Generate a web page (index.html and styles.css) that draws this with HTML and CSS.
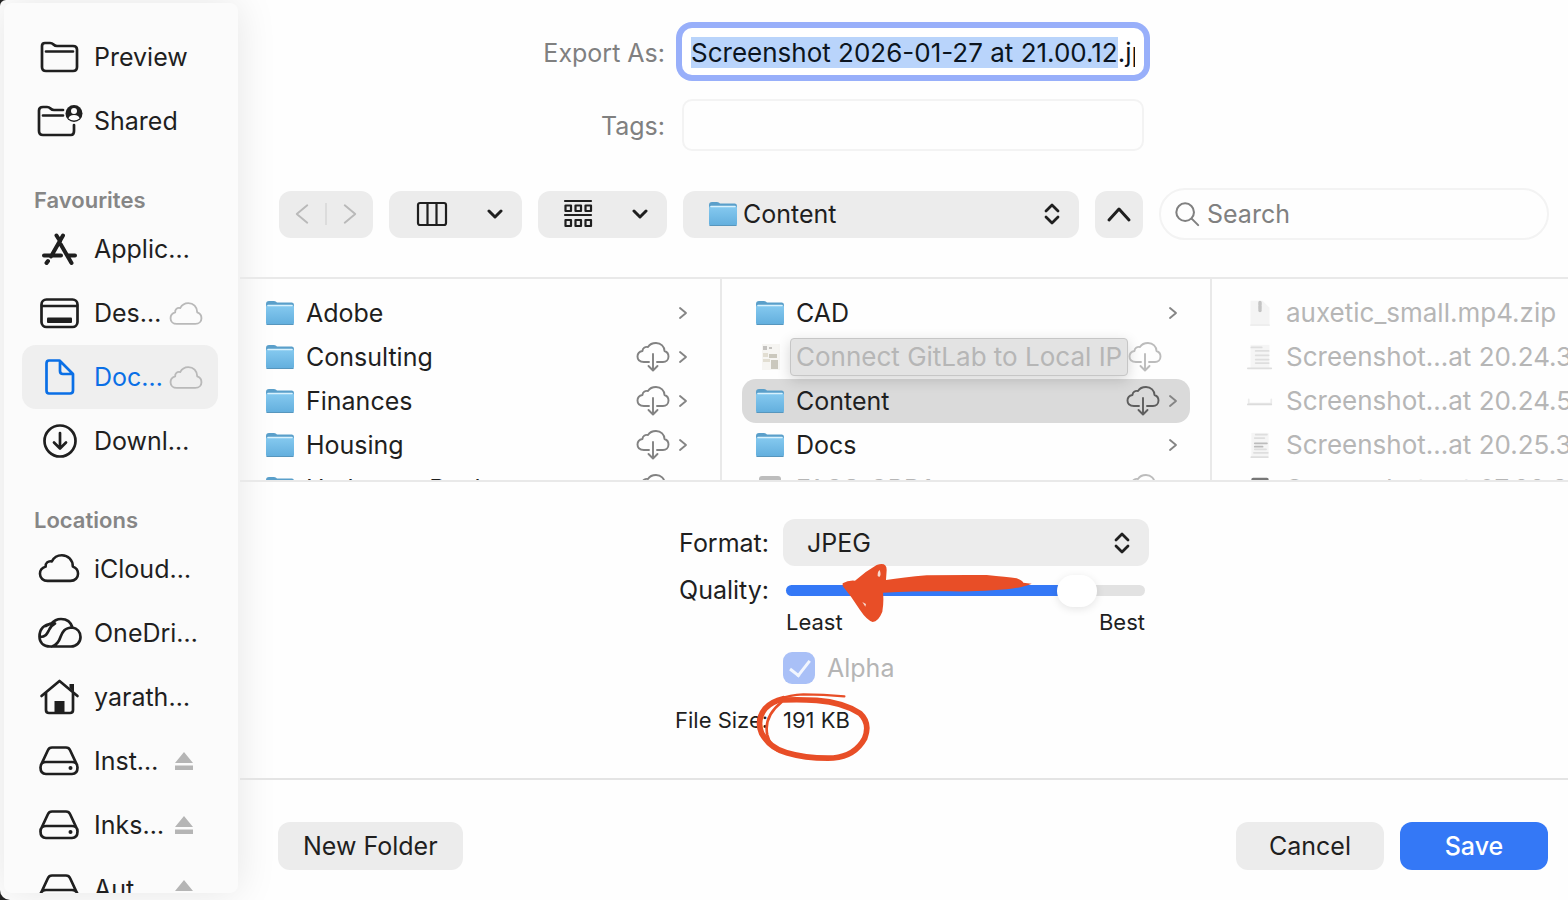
FILE: index.html
```
<!DOCTYPE html>
<html lang="en">
<head>
    <meta charset="UTF-8">
    <title>Export</title>
    <link rel="stylesheet" href="styles.css">
</head>
<body>
<!-- shared icons -->
<svg class="defs" width="0" height="0">
    <defs>
        <linearGradient id="blue" x1="0" y1="0" x2="0" y2="1">
            <stop offset="0" stop-color="#86caf0"/>
            <stop offset="1" stop-color="#62aedd"/>
        </linearGradient>
    </defs>
    <symbol id="folder" viewBox="0 0 30 26">
        <path d="M1 4Q1 1 4 1H9Q11 1 12 2.500H27Q29 2.500 29 5V20H1Z" fill="#5a9fca"/>
        <rect x="1" y="5" width="28" height="20" rx="2" fill="url(#blue)"/>
        <path d="M3 5.500H27" stroke="#d8f1fd" stroke-width="1.500"/>
        <path d="M2 24.500H28" stroke="#5796bd" stroke-width="1.200"/>
    </symbol>
    <symbol id="cloud" viewBox="0 0 44 32">
        <path d="M10 29.500H34C39 29.500 42 26 42 22C42 18 39.500 15.500 36.500 14.500C36.500 7.500 31.500 2.500 25 2.500C20 2.500 16.500 5 14.500 9C10.500 8 7.500 11 8 14.500C4.500 15.500 2 18.500 2 22C2 26.500 5.500 29.500 10 29.500Z"/>
    </symbol>
    <symbol id="download" viewBox="0 0 34 30">
        <path d="M13 20H8C4 20 1.500 18 1.500 14.500C1.500 11.500 4 9.500 6.500 9C6.500 6 9 4.500 12 5C13.500 2.500 16.500 1 20 1C25 1 28.500 4.500 28.500 9C31 9.800 32.500 12 32.500 14.500C32.500 18 30 20 27 20H21M17 12V28M12.500 24L17 28.500L21.500 24"/>
    </symbol>
    <symbol id="next" viewBox="0 0 10 14"><path d="M2 2L8 7L2 12"/></symbol>
    <symbol id="down" viewBox="0 0 16 10"><path d="M2 2L8 8L14 2"/></symbol>
    <symbol id="updown" viewBox="0 0 16 22"><path d="M2 8L8 2L14 8M2 14L8 20L14 14"/></symbol>
    <symbol id="drive" viewBox="0 0 40 30">
        <path d="M2 19L9 4Q10 1.500 13 1.500H27Q30 1.500 31 4L38 19M7 16H33Q38.500 16 38.500 21.500Q38.500 28 33 28H7Q1.500 28 1.500 21.500Q1.500 16 7 16Z"/>
        <circle cx="31.500" cy="22" r="2" fill="currentColor" stroke="none"/>
    </symbol>
    <symbol id="eject" viewBox="0 0 20 20"><path d="M10 1L19 12H1ZM1 14.500H19V19H1Z"/></symbol>
</svg>

<div class="window">
    <nav class="sidebar">
        <ul>
            <li><a href="#"><svg class="icon" viewBox="0 0 44 40"><path d="M5 9Q5 6 8 6H13Q15 6 16.500 7.500Q18 9 20 9H36Q40 9 40 12.500V30Q40 34 36 34H9Q5 34 5 30ZM9 14.500H36"/></svg><span>Preview</span></a></li>
            <li><a href="#"><svg class="icon" viewBox="0 0 44 40"><path d="M26 9H17Q15 9 13.500 7.500Q12 6 10 6H6Q2 6 2 9.500V30Q2 34 6 34H34Q37 34 37 30V24M6 14.500H26"/><circle cx="37" cy="12.500" r="8.500" fill="currentColor" stroke="none"/><circle cx="37" cy="10" r="3" fill="#fbfbfb" stroke="none"/><path d="M31.500 17.500Q32 14 37 14Q42 14 42.500 17.500Q40 19.500 37 19.500Q34 19.500 31.500 17.500Z" fill="#fbfbfb" stroke="none"/></svg><span>Shared</span></a></li>
        </ul>
        <h2>Favourites</h2>
        <ul>
            <li><a href="#"><svg class="icon thick" viewBox="0 0 44 40"><path d="M19.500 6.500L23 12M26 6.500L14 27.500M7 26.500H24M31.500 26.500H38M23.500 15L34.500 34M11 32L9.500 34"/></svg><span>Applic…</span></a></li>
            <li><a href="#"><svg class="icon" viewBox="0 0 44 40"><rect x="4.500" y="6.500" width="36" height="27.500" rx="5"/><path d="M5 13H40"/><rect x="10" y="24.500" width="25" height="5.500" rx="1" fill="currentColor" stroke="none"/></svg><span>Des…</span><svg class="sync"><use href="#cloud"/></svg></a></li>
            <li><a class="active" href="#"><svg class="icon" viewBox="0 0 44 40"><path d="M12 3.500H22.500L36 17V33.500Q36 36.500 33 36.500H12Q9.500 36.500 9.500 33.500V6.500Q9.500 3.500 12 3.500ZM23 4V14Q23 17 26 17H35.500"/></svg><span>Doc…</span><svg class="sync"><use href="#cloud"/></svg></a></li>
            <li><a href="#"><svg class="icon" viewBox="0 0 44 40"><circle cx="23" cy="20" r="15.500"/><path d="M23 12V27M17 21.500L23 27.500L29 21.500"/></svg><span>Downl…</span></a></li>
        </ul>
        <h2>Locations</h2>
        <ul>
            <li><a href="#"><svg class="icon" viewBox="-1 -4 46 42"><use href="#cloud" width="44" height="32"/></svg><span>iCloud…</span></a></li>
            <li><a href="#"><svg class="icon" viewBox="-1 0 44 40"><path d="M12 33.500C5 33.500 1.500 29 1.500 23.500C1.500 16 6.500 11 13 11C16 7.500 19 6 23 6C29 6 33 9.500 34.500 14.500C39 15.500 42.500 19 42.500 24C42.500 29.500 38.500 33.500 33 33.500ZM2 24C8 24 9.500 20 11 17C12.500 13.500 15 11.500 17 10.500C15 9.500 11 11 8 13M34.500 14.500C26 15 24.500 19 22.500 24C21 28.500 19 32 14 33.500"/></svg><span>OneDri…</span></a></li>
            <li><a href="#"><svg class="icon" viewBox="0 0 44 40"><path d="M4.500 19L22.500 4L40.500 19M9 16V33Q9 36 12 36H33Q36 36 36 33V16"/><path d="M17.500 24H27.500V36H17.500ZM32.500 7H37V15L32.500 11Z" fill="currentColor" stroke="none"/></svg><span>yarath…</span></a></li>
            <li><a href="#"><svg class="icon" viewBox="-2 -5 44 40"><use href="#drive" width="40" height="30"/></svg><span>Inst…</span><svg class="eject"><use href="#eject"/></svg></a></li>
            <li><a href="#"><svg class="icon" viewBox="-2 -5 44 40"><use href="#drive" width="40" height="30"/></svg><span>Inks…</span><svg class="eject"><use href="#eject"/></svg></a></li>
            <li><a href="#"><svg class="icon" viewBox="-2 -5 44 40"><use href="#drive" width="40" height="30"/></svg><span>Aut…</span><svg class="eject"><use href="#eject"/></svg></a></li>
        </ul>
    </nav>

    <main class="main">
        <form class="names">
            <label for="filename">Export As:</label>
            <input class="focused" type="text" id="filename" value="Screenshot 2026-01-27 at 21.00.12.jpg" spellcheck="false">
            <label for="tags">Tags:</label>
            <input type="text" id="tags">
        </form>

        <div class="toolbar">
            <div class="tool history">
                <button type="button" aria-label="Back" disabled><svg viewBox="0 0 16 24"><path d="M14 2L2 12L14 22"/></svg></button>
                <button type="button" aria-label="Forward" disabled><svg viewBox="0 0 16 24"><path d="M2 2L14 12L2 22"/></svg></button>
            </div>
            <button class="tool view" type="button" aria-label="Columns">
                <svg width="32" height="26" viewBox="0 0 32 26"><rect x="2" y="2" width="28" height="22" rx="2"/><path d="M11.500 2V24M20.500 2V24"/></svg>
                <svg class="caret" width="16" height="10"><use href="#down"/></svg>
            </button>
            <button class="tool group" type="button" aria-label="Group by">
                <svg width="30" height="30" viewBox="0 0 30 30"><path d="M2 2H28M2 16H28"/><path d="M2.500 6.500H8V12H2.500ZM12.500 6.500H18V12H12.500ZM22.500 6.500H28V12H22.500ZM2.500 21H8V27H2.500ZM12.500 21H18V27H12.500ZM22.500 21H28V27H22.500Z"/></svg>
                <svg class="caret" width="16" height="10"><use href="#down"/></svg>
            </button>
            <div class="tool place">
                <svg class="folder"><use href="#folder"/></svg>
                <select aria-label="Folder"><option>Content</option></select>
                <svg class="updown"><use href="#updown"/></svg>
            </div>
            <button class="tool up" type="button" aria-label="Collapse"><svg width="24" height="16" viewBox="0 0 24 16"><path d="M2 14L12 3L22 14"/></svg></button>
            <div class="search">
                <svg viewBox="0 0 28 28"><circle cx="12" cy="12" r="9.500"/><path d="M19 19L26 26"/></svg>
                <input type="search" placeholder="Search" aria-label="Search">
            </div>
        </div>

        <div class="browser">
            <ul class="column">
                <li><svg class="folder"><use href="#folder"/></svg><span>Adobe</span><svg class="next"><use href="#next"/></svg></li>
                <li><svg class="folder"><use href="#folder"/></svg><span>Consulting</span><svg class="get"><use href="#download"/></svg><svg class="next"><use href="#next"/></svg></li>
                <li><svg class="folder"><use href="#folder"/></svg><span>Finances</span><svg class="get"><use href="#download"/></svg><svg class="next"><use href="#next"/></svg></li>
                <li><svg class="folder"><use href="#folder"/></svg><span>Housing</span><svg class="get"><use href="#download"/></svg><svg class="next"><use href="#next"/></svg></li>
                <li><svg class="folder"><use href="#folder"/></svg><span>Hydrogen Bank</span><svg class="get"><use href="#download"/></svg><svg class="next"><use href="#next"/></svg></li>
            </ul>
            <ul class="column">
                <li><svg class="folder"><use href="#folder"/></svg><span>CAD</span><svg class="next"><use href="#next"/></svg></li>
                <li class="dim"><svg class="folder" viewBox="0 0 30 26"><path d="M7 0H25V26H7Z" fill="#f6f5f2"/><path d="M8 2H12V6H8ZM14 3H17V5H14Z" fill="#c4c2bf"/><path d="M8 9H13V13H8ZM8 15H15V18H8Z" fill="#e2ded2"/><path d="M14 10H22V14H14ZM16 16H23V25H16Z" fill="#cbc8bd"/></svg><span class="tip">Connect GitLab to Local IP</span><svg class="get"><use href="#download"/></svg><i class="next"></i></li>
                <li class="selected"><svg class="folder"><use href="#folder"/></svg><span>Content</span><svg class="get"><use href="#download"/></svg><svg class="next"><use href="#next"/></svg></li>
                <li><svg class="folder"><use href="#folder"/></svg><span>Docs</span><svg class="next"><use href="#next"/></svg></li>
                <li class="dim"><svg class="folder" viewBox="0 0 30 26"><rect x="4" y="0" width="22" height="26" rx="3" fill="#bdbdbd"/></svg><span>FACS_CRD1</span><svg class="get"><use href="#download"/></svg><i class="next"></i></li>
            </ul>
            <ul class="column files">
                <li class="dim"><svg class="folder" viewBox="0 0 30 30"><path d="M4 1H18L26 9V29H4Z" fill="#f4f4f4"/><path d="M15 3V12" stroke="#c4c4c4" stroke-width="4" stroke-dasharray="3 1"/><path d="M4 29H26" stroke="#e4e4e4"/></svg><span>auxetic_small.mp4.zip</span></li>
                <li class="dim"><svg class="folder" viewBox="0 0 30 30"><path d="M4 1H26V29H4Z" fill="#f5f5f5"/><path d="M5 4H17M10 8H25M10 13H25M10 18H25M10 22H25M1 28H28" stroke="#dedede" stroke-width="2"/></svg><span>Screenshot…at 20.24.32</span></li>
                <li class="dim"><svg class="folder" viewBox="0 0 30 30"><path d="M2 13V18H28V13" fill="none" stroke="#ececec" stroke-width="2"/><path d="M1 19H28" stroke="#dcdcdc" stroke-width="2"/></svg><span>Screenshot…at 20.24.57</span></li>
                <li class="dim"><svg class="folder" viewBox="0 0 30 30"><path d="M5 1H25V29H5Z" fill="#f5f5f5"/><path d="M10 3H23M9 7H20M8 24H24M9 20H22M5 29H24" stroke="#dedede" stroke-width="2"/><path d="M9 13H23M9 17H18" stroke="#bcbcbc" stroke-width="2"/></svg><span>Screenshot…at 20.25.39</span></li>
                <li class="dim"><svg class="folder" viewBox="0 0 30 30"><rect x="5" y="2" width="20" height="26" rx="2" fill="#777"/></svg><span>Screenshot…at 07.22.31</span></li>
            </ul>
        </div>

        <div class="options">
            <form class="settings">
                <label for="format">Format:</label>
                <div class="tool format">
                    <select id="format"><option>JPEG</option></select>
                    <svg class="updown"><use href="#updown"/></svg>
                </div>
                <label for="quality">Quality:</label>
                <input type="range" id="quality" min="0" max="100" value="85">
                <div class="scale"><span>Least</span><span>Best</span></div>
                <div class="alpha">
                    <input type="checkbox" id="alpha" checked disabled>
                    <label for="alpha">Alpha</label>
                </div>
                <span class="small">File Size:</span>
                <span class="small">191 KB</span>
                <!-- hand-drawn arrow and circle -->
                <svg class="marks" viewBox="0 0 1500 840">
                    <path d="M548 250Q565 240 585 242Q615 215 650 195Q680 185 680 210L678 240Q730 232 800 226Q900 224 980 225Q1040 231 1070 235Q1085 240 1090 248L1115 251Q1090 262 1040 268Q960 276 870 274Q780 273 669 278Q672 305 667 335Q655 365 638 366Q620 360 600 330Q575 290 548 258Z" fill="#e84e27"/>
                    <path d="M653 228Q652 215 659 210Q665 225 658 231ZM607 306L618 312L616 320Z" fill="#f8d9cf"/>
                    <path d="M553 589Q490 583 430 583Q390 585 355 598" fill="none" stroke="#e84e27" stroke-width="7" stroke-linecap="round"/>
                    <path d="M370 596Q335 604 316 625Q288 660 305 700Q330 745 380 758Q440 776 520 774Q585 768 614 715Q632 670 600 640Q550 607 470 601Q420 598 370 600" fill="none" stroke="#e84e27" stroke-width="17" stroke-linecap="round" stroke-linejoin="round"/>
                    <path d="M365 606Q310 650 322 705Q332 740 350 750" fill="none" stroke="#e84e27" stroke-width="8"/>
                </svg>
            </form>
        </div>

        <div class="footer">
            <button class="btn" type="button">New Folder</button>
            <button class="btn cancel" type="button">Cancel</button>
            <button class="btn save" type="button">Save</button>
        </div>
    </main>
</div>

<script>
    // select the name without its extension
    var filename = document.getElementById('filename');
    filename.focus();
    filename.setSelectionRange(0, filename.value.lastIndexOf('.'));
    filename.scrollLeft = 0;
</script>
</body>
</html>
```
FILE: styles.css
```
* {
    margin: 0;
    padding: 0;
    box-sizing: border-box;
}
body {
    background: #222;
    font: 25px/32px Inter, "Liberation Sans", sans-serif;
    color: #1f1f1f;
}
ul {
    list-style: none;
}
button, input, select {
    font: inherit;
    color: inherit;
    border: 0;
    outline: 0;
    background: none;
    appearance: none;
}
svg {
    display: block;
    flex: none;
    overflow: visible;
    fill: none;
    stroke: currentColor;
    stroke-linecap: round;
    stroke-linejoin: round;
}
.defs {
    position: absolute;
}
.window {
    display: flex;
    height: 100vh;
    overflow: hidden;
    background: #fefefe;
    border-radius: 6px 0 0 10px;
}

/* sidebar */
.sidebar {
    flex: none;
    width: 234px;
    margin: 3px 2px 7px 4px;
    padding: 22px 20px 0 18px;
    overflow: hidden;
    background: #fbfbfb;
    border-radius: 8px;
    box-shadow: 0 0 40px rgba(0, 0, 0, 0.1);
}
.sidebar h2 {
    height: 64px;
    padding: 31px 12px 0;
    font-size: 22px;
    line-height: 32px;
    font-weight: 600;
    color: #868686;
}
.sidebar a {
    display: flex;
    align-items: center;
    height: 64px;
    padding-left: 15px;
    color: inherit;
    text-decoration: none;
    border-radius: 14px;
}
.sidebar a.active {
    background: #efefef;
    color: #0a6fe6;
}
.sidebar span {
    margin-left: 13px;
    white-space: nowrap;
}
.icon {
    width: 44px;
    height: 40px;
    stroke-width: 2.7;
}
.thick {
    stroke-width: 4;
}
.sync {
    width: 34px;
    height: 25px;
    margin: 0 15px 0 auto;
    color: #b9b9b9;
    stroke-width: 2.4;
}
.eject {
    width: 20px;
    height: 20px;
    margin: 0 24px 0 auto;
    fill: #b5b5b5;
    stroke: none;
}

/* name fields */
.main {
    flex: 1;
    min-width: 0;
    display: flex;
    flex-direction: column;
}
.names {
    display: grid;
    grid-template-columns: 1fr 462px 1fr;
    column-gap: 17px;
    row-gap: 24px;
    align-items: center;
    padding: 28px 0 37px 18px;
}
.names label {
    grid-column: 1;
    padding-top: 2px;
    text-align: right;
    color: #808080;
}
.names input {
    height: 52px;
    padding: 0 9px;
    border: 2px solid #f3f3f3;
    border-radius: 10px;
}
.names .focused {
    height: 47px;
    padding-top: 2px;
    border: 0;
    font-size: 26px;
    color: #0b1420;
    background: #fff;
    box-shadow: 0 0 0 6px #98affa;
}
.names input::selection {
    background: #b9d4fb;
    color: #0b1420;
}

/* toolbar */
.toolbar {
    display: flex;
    align-items: center;
    gap: 16px;
    padding: 0 19px 37px 39px;
    border-bottom: 2px solid #e9e9e9;
}
.tool {
    display: flex;
    align-items: center;
    height: 47px;
    background: #ececec;
    border-radius: 12px;
    stroke-width: 2.2;
}
.history {
    width: 94px;
    color: #b9b9b9;
}
.history button {
    flex: 1;
    display: flex;
    justify-content: center;
}
.history button + button {
    border-left: 2px solid #dcdcdc;
}
.history svg {
    width: 14px;
    height: 22px;
}
.view {
    width: 133px;
    padding: 0 19px 0 27px;
    justify-content: space-between;
}
.group {
    width: 129px;
    padding: 0 19px 0 25px;
    justify-content: space-between;
}
.caret {
    stroke-width: 3;
}
.place {
    flex: 1;
    padding-left: 25px;
    position: relative;
}
.place select, .format select {
    flex: 1;
    height: 47px;
}
.place select {
    padding-left: 5px;
}
.updown {
    position: absolute;
    right: 19px;
    width: 16px;
    height: 22px;
    stroke-width: 2.8;
    pointer-events: none;
}
.up {
    width: 48px;
    justify-content: center;
    stroke-width: 3;
}
.search {
    display: flex;
    align-items: center;
    width: 390px;
    height: 52px;
    padding: 0 13px;
    border: 2px solid #f3f3f3;
    border-radius: 26px;
    color: #808080;
}
.search svg {
    width: 26px;
    height: 26px;
    stroke-width: 2.2;
}
.search input {
    flex: 1;
    min-width: 0;
    padding-left: 7px;
}
.search input::placeholder {
    color: #808080;
}

/* file browser */
.browser {
    display: flex;
    height: 203px;
    overflow: hidden;
    border-bottom: 2px solid #e9e9e9;
}
.column {
    flex: none;
    width: 490px;
    padding: 12px 20px 0;
    border-right: 2px solid #e9e9e9;
}
.column:first-child {
    width: 482px;
    padding-left: 12px;
}
.files {
    flex: 1;
    min-width: 0;
    border: 0;
    padding-right: 0;
    font-size: 26px;
}
.column li {
    display: flex;
    align-items: center;
    height: 44px;
    padding: 0 12px 0 13px;
    border-radius: 14px;
    white-space: nowrap;
}
.files li {
    padding-right: 0;
}
.column span {
    flex: 1;
    margin-left: 11px;
}
.selected {
    background: #dadada;
}
.dim {
    color: #b6b6b6;
}
.folder {
    width: 30px;
    height: 26px;
    stroke: none;
}
.column .tip {
    flex: none;
    height: 38px;
    margin-left: 5px;
    padding: 0 5px;
    line-height: 36px;
    font-size: 26px;
    background: #e3e3e3;
    border: 1px solid #c6c6c6;
    border-radius: 4px;
    box-shadow: 0 4px 14px rgba(0, 0, 0, 0.16);
}
.get {
    width: 34px;
    height: 30px;
    margin-left: auto;
    margin-right: 8px;
    color: #828282;
    stroke-width: 1.9;
}
.dim .get {
    color: #bcbcbc;
}
.selected .get {
    color: #5e5e5e;
}
.next {
    width: 10px;
    height: 14px;
    color: #858585;
    stroke-width: 1.9;
}

/* export options */
.options {
    flex: 1;
    padding: 37px 0 0 16px;
    border-bottom: 2px solid #e4e4e4;
}
.settings {
    position: relative;
    display: grid;
    grid-template-columns: 94px 366px;
    column-gap: 14px;
    justify-content: center;
    align-items: center;
    width: 474px;
    margin: 0 auto;
}
.settings > label {
    text-align: right;
}
.format {
    position: relative;
}
.format select {
    padding-left: 24px;
}
.settings input[type=range] {
    height: 48px;
    margin: 0 4px 0 3px;
}
.settings input::-webkit-slider-runnable-track {
    height: 11px;
    border-radius: 6px;
    background: linear-gradient(to right, #3478f6 80%, #e2e2e2 80%);
}
.settings input::-webkit-slider-thumb {
    appearance: none;
    width: 40px;
    height: 32px;
    margin-top: -10px;
    border-radius: 16px;
    background: #fff;
    box-shadow: 0 2px 8px rgba(0, 0, 0, 0.1);
}
.scale, .alpha {
    grid-column: 2;
    display: flex;
}
.scale {
    justify-content: space-between;
    padding: 0 4px 0 3px;
    font-size: 22px;
    line-height: 16px;
}
.alpha {
    align-items: center;
    gap: 12px;
    height: 76px;
    color: #b5b5b5;
}
.alpha input {
    width: 32px;
    height: 32px;
    border-radius: 9px;
    background: #a9c0f7;
}
.alpha input::before {
    content: "";
    display: block;
    width: 9px;
    height: 17px;
    margin: 4px 0 0 11px;
    border: solid #f2f6fe;
    border-width: 0 3px 3px 0;
    rotate: 38deg;
}
.small {
    font-size: 22px;
    line-height: 28px;
    white-space: nowrap;
}
.marks {
    position: absolute;
    left: -15px;
    top: -19px;
    width: 500px;
    height: 280px;
    stroke: none;
    pointer-events: none;
}

/* footer */
.footer {
    display: flex;
    gap: 16px;
    padding: 42px 20px 30px 38px;
}
.btn {
    height: 48px;
    padding: 0 25px;
    border-radius: 12px;
    background: #ececec;
}
.cancel, .save {
    width: 148px;
}
.cancel {
    margin-left: auto;
}
.save {
    background: #3478f6;
    color: #fff;
    font-weight: 500;
}
```
